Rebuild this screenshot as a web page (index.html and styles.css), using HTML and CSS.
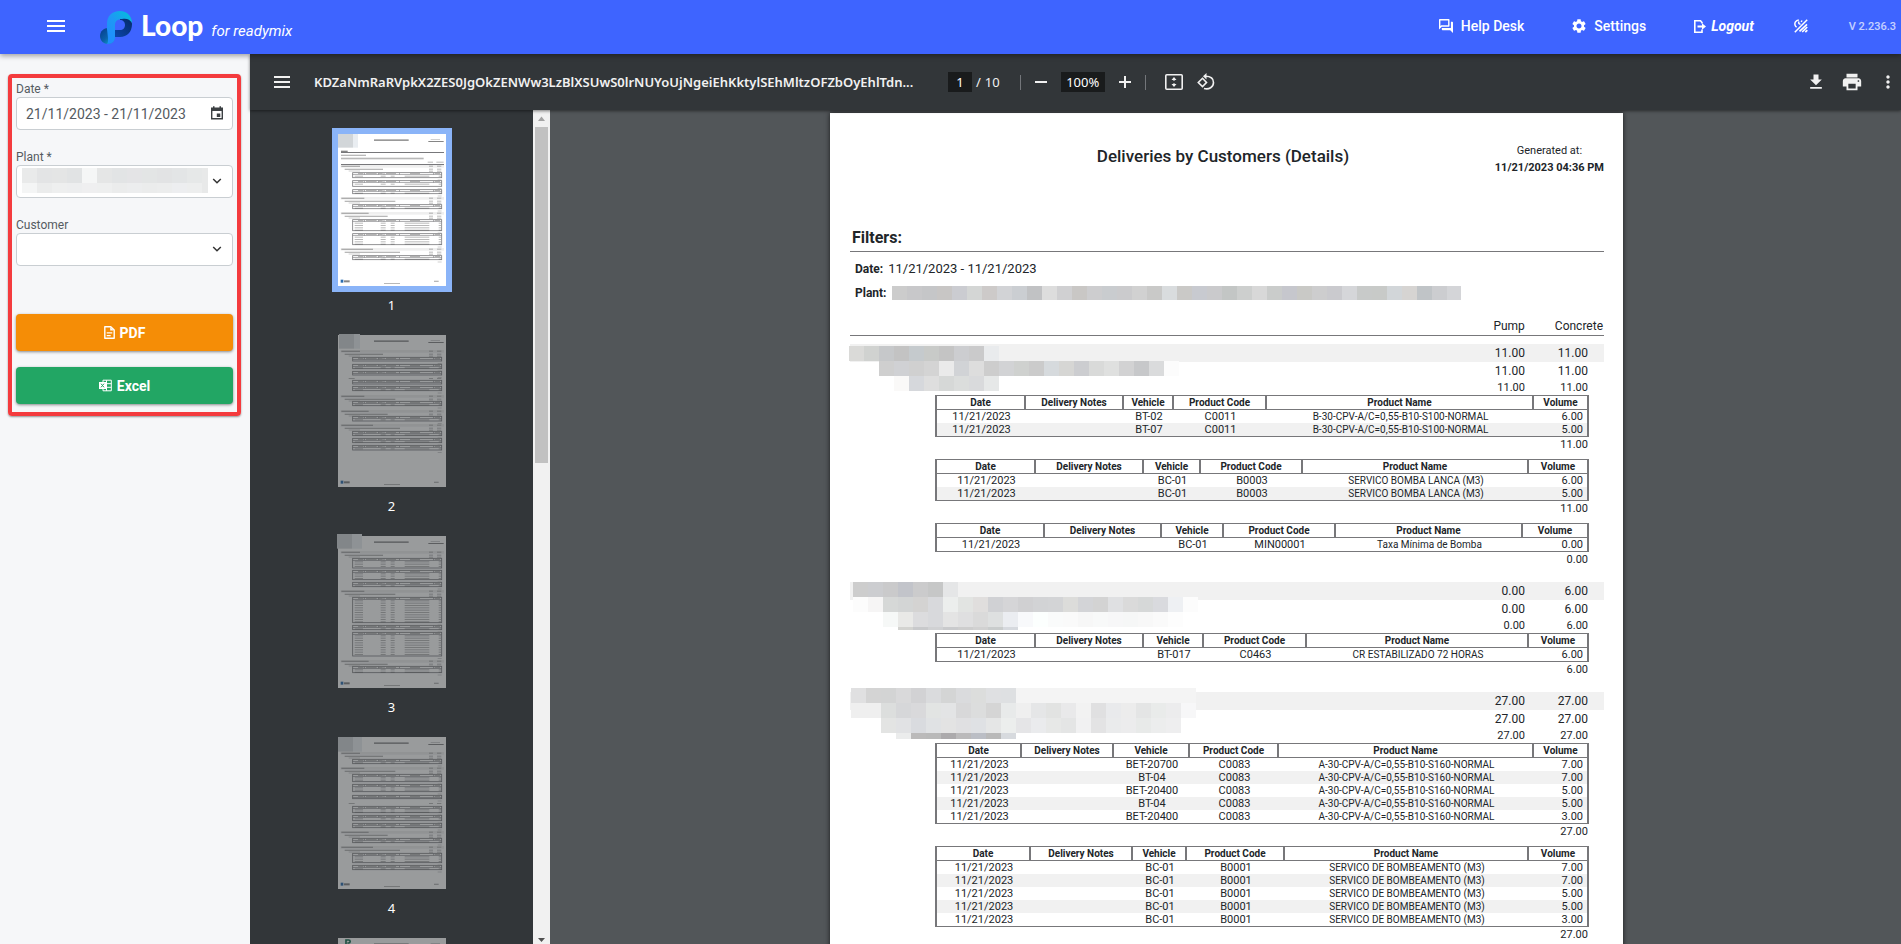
FILE: index.html
```html
<!DOCTYPE html>
<html lang="en">
<head>
<meta charset="utf-8">
<title>Loop for readymix - Deliveries by Customers</title>
<link rel="stylesheet" href="styles.css">
</head>
<body>
<header class="topbar">
  <button class="icon-btn menu-btn" type="button" aria-label="Menu">
    <svg width="18" height="12" viewBox="0 0 18 12"><path fill="currentColor" d="M0 0h18v2H0zM0 5h18v2H0zM0 10h18v2H0z"/></svg>
  </button>
  <a class="brand" href="#">
    <svg width="33" height="33" viewBox="0 0 33 33" aria-hidden="true">
      <defs>
        <linearGradient id="lg-top" x1="0" y1="1" x2="1" y2="0"><stop offset="0" stop-color="#1e8bff"/><stop offset=".5" stop-color="#1e98f5"/><stop offset="1" stop-color="#00c2d8"/></linearGradient>
        <linearGradient id="lg-dark" x1="1" y1="0" x2="0" y2="1"><stop offset="0" stop-color="#052a66"/><stop offset="1" stop-color="#0b46ad"/></linearGradient>
        <linearGradient id="lg-foot" x1="0" y1="0" x2="1" y2="1"><stop offset="0" stop-color="#063a8c"/><stop offset=".5" stop-color="#0a5fa8"/><stop offset="1" stop-color="#10b5dc"/></linearGradient>
      </defs>
      <path fill="url(#lg-dark)" d="M20 7c6-1 12 1 12 6 0 8-5 13-12 13h-6v-7h6c3 0 5-2 5-5s-2-5-5-5z"/>
      <path fill="url(#lg-foot)" d="M8 17h7v8c0 5-3 8-7 8s-8-3-8-8 4-8 8-8z"/>
      <path fill="url(#lg-top)" d="M7 18V13C7 5 12 0 20 0c7 0 12 5 12 12-2-4-6-5-10-4-4 0-7 2-7 6v12c0 4-3 7-8 7 1-1 1-3 1-6z"/>
    </svg>
    <span class="brand-name">Loop</span>
    <span class="brand-sub">for readymix</span>
  </a>
  <nav class="topnav">
    <a class="nav-help" href="#">
      <svg width="14" height="14" viewBox="2 2 20 20"><path fill="currentColor" d="M15 4v7H5.17L4 12.17V4h11m1-2H3c-.55 0-1 .45-1 1v14l4-4h10c.55 0 1-.45 1-1V3c0-.55-.45-1-1-1zm5 4h-2v9H6v2c0 .55.45 1 1 1h11l4 4V7c0-.55-.45-1-1-1z"/></svg>
      Help Desk</a>
    <a class="nav-settings" href="#">
      <svg width="14" height="14" viewBox="2 2 20 20"><path fill="currentColor" d="M19.14 12.94c.04-.3.06-.61.06-.94 0-.32-.02-.64-.07-.94l2.03-1.58c.18-.14.23-.41.12-.61l-1.92-3.32c-.12-.22-.37-.29-.59-.22l-2.39.96c-.5-.38-1.03-.7-1.62-.94l-.36-2.54c-.04-.24-.24-.41-.48-.41h-3.84c-.24 0-.43.17-.47.41l-.36 2.54c-.59.24-1.13.57-1.62.94l-2.39-.96c-.22-.08-.47 0-.59.22L2.74 8.87c-.12.21-.08.47.12.61l2.03 1.58c-.05.3-.09.63-.09.94s.02.64.07.94l-2.03 1.58c-.18.14-.23.41-.12.61l1.92 3.32c.12.22.37.29.59.22l2.39-.96c.5.38 1.03.7 1.62.94l.36 2.54c.05.24.24.41.48.41h3.84c.24 0 .44-.17.47-.41l.36-2.54c.59-.24 1.13-.56 1.62-.94l2.39.96c.22.08.47 0 .59-.22l1.92-3.32c.12-.22.07-.47-.12-.61l-2.01-1.58zM12 15.6c-1.98 0-3.6-1.62-3.6-3.6s1.62-3.6 3.6-3.6 3.6 1.62 3.6 3.6-1.62 3.6-3.6 3.6z"/></svg>
      Settings</a>
    <a class="nav-logout" href="#">
      <svg width="12" height="13" viewBox="0 0 12 13"><path fill="none" stroke="currentColor" stroke-width="1.600" d="M8 3.600V2.500L6.500.8H.8v11.400H8V9.500"/><path fill="currentColor" d="M3.500 5.600H8V3.300l4 3.200-4 3.200V7.400H3.500z"/></svg>
      Logout</a>
    <button class="icon-btn nav-theme" type="button" aria-label="Toggle theme">
      <svg width="14" height="14" viewBox="0 0 14 14" fill="none" stroke="currentColor" stroke-width="1.500"><path d="M.8 13.200 13.200.8"/><path d="M4.800.9C1.600 1.300.3 4 1.100 6.200c.3.9.8 1.500 1.500 2M5 2.500c-.8 1.400 0 3 1.500 2.500M8 1.500 7.200 3"/><path d="M5.500 12.300 13 5.300M8.200 13l5-5M11.300 13.200l2-2" stroke-width="1.700"/></svg>
    </button>
    <span class="version">V 2.236.3</span>
  </nav>
</header>

<div class="workspace">
  <aside class="sidebar">
    <form class="filters">
      <div class="field">
        <label for="date">Date *</label>
        <div class="control">
          <input id="date" type="text" value="21/11/2023 - 21/11/2023">
          <svg class="adorn cal" width="14" height="14" viewBox="0 0 14 14"><path fill="none" stroke="#3c4043" stroke-width="1.400" d="M1.700 2.200h10.600v10.600H1.700z"/><path fill="#3c4043" d="M1.500 2h11v3h-11zM3 .3h1.500V2H3zM9.500.3H11V2H9.500zM6.800 7.500h3.500V11H6.800z"/></svg>
        </div>
      </div>
      <div class="field">
        <label for="plant">Plant *</label>
        <div class="control">
          <select id="plant"><option></option></select>
          <svg class="mosaic field-mosaic" width="186" height="25" data-mosaic="field"></svg>
          <svg class="adorn" width="14" height="14" viewBox="0 0 14 14"><path fill="none" stroke="#333" stroke-width="1.500" d="M3.200 5 7 8.700 10.800 5"/></svg>
        </div>
      </div>
      <div class="field">
        <label for="customer">Customer</label>
        <div class="control">
          <select id="customer"><option></option></select>
          <svg class="adorn" width="14" height="14" viewBox="0 0 14 14"><path fill="none" stroke="#333" stroke-width="1.500" d="M3.200 5 7 8.700 10.800 5"/></svg>
        </div>
      </div>
      <div class="actions">
        <button class="export pdf" type="button">
          <svg width="11" height="13" viewBox="0 0 11 13"><path fill="none" stroke="currentColor" stroke-width="1.400" stroke-linejoin="round" d="M.8.8h6L10.200 4v8.200H.8z"/><path fill="currentColor" d="M6.200 1v3.600h3.600zM2.700 6.200h5.600v1.300H2.700zM2.700 8.900h4v1.300h-4z"/></svg>
          PDF</button>
        <button class="export excel" type="button">
          <svg width="13" height="13" viewBox="0 0 13 13"><path fill="none" stroke="currentColor" d="M4 3V1.200h8.300v10.600H4V10M7.500 1.200v10.600M7 4.700h5.300M7 8.300h5.300"/><path fill="currentColor" d="M0 3h7v7H0z"/><path stroke="#22a664" d="M2 4.700 5 8.300M5 4.700 2 8.300"/></svg>
          Excel</button>
      </div>
    </form>
  </aside>

  <main class="viewer">
    <div class="toolbar">
      <button class="icon-btn" type="button" aria-label="Toggle sidebar">
        <svg width="16" height="12" viewBox="0 0 16 12"><path fill="currentColor" d="M0 0h16v2H0zM0 5h16v2H0zM0 10h16v2H0z"/></svg>
      </button>
      <h2 class="doc-title">KDZaNmRaRVpkX2ZES0JgOkZENWw3LzBlXSUwS0lrNUYoUjNgeiEhKktylSEhMltzOFZbOyEhlTdn...</h2>
      <div class="pager"><input class="page-input" aria-label="Page number" value="1"><span>/</span><span>10</span></div>
      <span class="divider"></span>
      <button class="icon-btn" type="button" aria-label="Zoom out"><svg width="12" height="12" viewBox="0 0 12 12"><path fill="currentColor" d="M0 5h12v2H0z"/></svg></button>
      <input class="zoom-input" aria-label="Zoom level" value="100%">
      <button class="icon-btn" type="button" aria-label="Zoom in"><svg width="12" height="12" viewBox="0 0 12 12"><path fill="currentColor" d="M0 5h12v2H0zM5 0h2v12H5z"/></svg></button>
      <span class="divider"></span>
      <button class="icon-btn fit-btn" type="button" aria-label="Fit to page"><svg width="18" height="16" viewBox="0 0 18 16"><rect x=".8" y=".8" width="16.400" height="14.400" rx="1" fill="none" stroke="currentColor" stroke-width="1.600"/><path fill="currentColor" d="M9 3l2.500 3h-5zM9 13l2.500-3h-5zM8.500 6h1v1h-1zM8.500 9h1v1h-1z"/></svg></button>
      <button class="icon-btn" type="button" aria-label="Rotate"><svg width="18" height="18" viewBox="0 0 18 18" fill="none" stroke="currentColor" stroke-width="1.600"><path d="M5.500 5.300 9.500 9.500 5.500 13.600 1.300 9.500z"/><path d="M8.500 3.200c5 0 8 2.500 8 6.300 0 4.500-4.500 7.500-9.500 6"/><path fill="currentColor" stroke="none" d="M9.500 0v6.400L6 3.200z"/></svg></button>
      <div class="toolbar-end">
        <button class="icon-btn" type="button" aria-label="Download"><svg width="20" height="20" viewBox="0 0 24 24"><path fill="currentColor" d="M19 9h-4V3H9v6H5l7 7 7-7zM5 18v2h14v-2H5z"/></svg></button>
        <button class="icon-btn" type="button" aria-label="Print"><svg width="22" height="22" viewBox="0 0 24 24"><path fill="currentColor" d="M19 8H5c-1.660 0-3 1.340-3 3v6h4v4h12v-4h4v-6c0-1.660-1.340-3-3-3zm-3 11H8v-5h8v5zm3-7c-.55 0-1-.45-1-1s.45-1 1-1 1 .45 1 1-.45 1-1 1zm-1-9H6v4h12V3z"/></svg></button>
        <button class="icon-btn" type="button" aria-label="More actions"><svg width="20" height="20" viewBox="0 0 24 24"><path fill="currentColor" d="M12 8c1.100 0 2-.9 2-2s-.9-2-2-2-2 .9-2 2 .9 2 2 2zm0 2c-1.100 0-2 .9-2 2s.9 2 2 2 2-.9 2-2-.9-2-2-2zm0 6c-1.100 0-2 .9-2 2s.9 2 2 2 2-.9 2-2-.9-2-2-2z"/></svg></button>
      </div>
    </div>
    <div class="viewer-body">
      <div class="thumbs">
        <div class="thumb-list" id="thumb-list"></div>
        <div class="scrollbar" aria-hidden="true">
          <svg width="17" height="17" viewBox="0 0 17 17"><path fill="#a3a3a3" d="M8.500 6.500 12 11H5z"/></svg>
          <div class="scroll-thumb"></div>
          <svg width="17" height="17" viewBox="0 0 17 17"><path fill="#505050" d="M8.500 15 12 11H5z"/></svg>
        </div>
      </div>
      <div class="canvas">
        <article class="paper">
          <header class="paper-head">
            <h1>Deliveries by Customers (Details)</h1>
            <p class="generated">Generated at:<br><strong>11/21/2023 04:36 PM</strong></p>
          </header>
          <h3 class="filters-title">Filters:</h3>
          <dl class="filter-list">
            <div><dt>Date:</dt><dd>11/21/2023 - 11/21/2023</dd></div>
            <div><dt>Plant:</dt><dd><svg class="mosaic" width="569" height="14" data-mosaic="plant"></svg></dd></div>
          </dl>
          <div class="totals-head"><span>Pump</span><span>Concrete</span></div>

          <section class="group">
            <div class="group-head">
              <svg class="mosaic group-mosaic" width="1" height="1" data-mosaic="g1"></svg>
              <p class="sum band"><span>11.00</span><span>11.00</span></p>
              <p class="sum"><span>11.00</span><span>11.00</span></p>
              <p class="sum small"><span>11.00</span><span>11.00</span></p>
            </div>
            <table class="items t1">
              <colgroup><col><col><col><col><col><col></colgroup>
              <thead><tr><th>Date</th><th>Delivery Notes</th><th>Vehicle</th><th>Product Code</th><th>Product Name</th><th>Volume</th></tr></thead>
              <tbody>
                <tr><td>11/21/2023</td><td></td><td>BT-02</td><td>C0011</td><td>B-30-CPV-A/C=0,55-B10-S100-NORMAL</td><td>6.00</td></tr>
                <tr><td>11/21/2023</td><td></td><td>BT-07</td><td>C0011</td><td>B-30-CPV-A/C=0,55-B10-S100-NORMAL</td><td>5.00</td></tr>
              </tbody>
            </table>
            <p class="subtotal">11.00</p>
            <table class="items t2">
              <colgroup><col><col><col><col><col><col></colgroup>
              <thead><tr><th>Date</th><th>Delivery Notes</th><th>Vehicle</th><th>Product Code</th><th>Product Name</th><th>Volume</th></tr></thead>
              <tbody>
                <tr><td>11/21/2023</td><td></td><td>BC-01</td><td>B0003</td><td>SERVICO BOMBA LANCA (M3)</td><td>6.00</td></tr>
                <tr><td>11/21/2023</td><td></td><td>BC-01</td><td>B0003</td><td>SERVICO BOMBA LANCA (M3)</td><td>5.00</td></tr>
              </tbody>
            </table>
            <p class="subtotal">11.00</p>
            <table class="items t3">
              <colgroup><col><col><col><col><col><col></colgroup>
              <thead><tr><th>Date</th><th>Delivery Notes</th><th>Vehicle</th><th>Product Code</th><th>Product Name</th><th>Volume</th></tr></thead>
              <tbody>
                <tr><td>11/21/2023</td><td></td><td>BC-01</td><td>MIN00001</td><td>Taxa Mínima de Bomba</td><td>0.00</td></tr>
              </tbody>
            </table>
            <p class="subtotal">0.00</p>
          </section>

          <section class="group">
            <div class="group-head">
              <svg class="mosaic group-mosaic" width="1" height="1" data-mosaic="g2"></svg>
              <p class="sum band"><span>0.00</span><span>6.00</span></p>
              <p class="sum"><span>0.00</span><span>6.00</span></p>
              <p class="sum small"><span>0.00</span><span>6.00</span></p>
            </div>
            <table class="items t4">
              <colgroup><col><col><col><col><col><col></colgroup>
              <thead><tr><th>Date</th><th>Delivery Notes</th><th>Vehicle</th><th>Product Code</th><th>Product Name</th><th>Volume</th></tr></thead>
              <tbody>
                <tr><td>11/21/2023</td><td></td><td>BT-017</td><td>C0463</td><td>CR ESTABILIZADO 72 HORAS</td><td>6.00</td></tr>
              </tbody>
            </table>
            <p class="subtotal">6.00</p>
          </section>

          <section class="group">
            <div class="group-head">
              <svg class="mosaic group-mosaic" width="1" height="1" data-mosaic="g3"></svg>
              <p class="sum band"><span>27.00</span><span>27.00</span></p>
              <p class="sum"><span>27.00</span><span>27.00</span></p>
              <p class="sum small"><span>27.00</span><span>27.00</span></p>
            </div>
            <table class="items t5">
              <colgroup><col><col><col><col><col><col></colgroup>
              <thead><tr><th>Date</th><th>Delivery Notes</th><th>Vehicle</th><th>Product Code</th><th>Product Name</th><th>Volume</th></tr></thead>
              <tbody>
                <tr><td>11/21/2023</td><td></td><td>BET-20700</td><td>C0083</td><td>A-30-CPV-A/C=0,55-B10-S160-NORMAL</td><td>7.00</td></tr>
                <tr><td>11/21/2023</td><td></td><td>BT-04</td><td>C0083</td><td>A-30-CPV-A/C=0,55-B10-S160-NORMAL</td><td>7.00</td></tr>
                <tr><td>11/21/2023</td><td></td><td>BET-20400</td><td>C0083</td><td>A-30-CPV-A/C=0,55-B10-S160-NORMAL</td><td>5.00</td></tr>
                <tr><td>11/21/2023</td><td></td><td>BT-04</td><td>C0083</td><td>A-30-CPV-A/C=0,55-B10-S160-NORMAL</td><td>5.00</td></tr>
                <tr><td>11/21/2023</td><td></td><td>BET-20400</td><td>C0083</td><td>A-30-CPV-A/C=0,55-B10-S160-NORMAL</td><td>3.00</td></tr>
              </tbody>
            </table>
            <p class="subtotal">27.00</p>
            <table class="items t6">
              <colgroup><col><col><col><col><col><col></colgroup>
              <thead><tr><th>Date</th><th>Delivery Notes</th><th>Vehicle</th><th>Product Code</th><th>Product Name</th><th>Volume</th></tr></thead>
              <tbody>
                <tr><td>11/21/2023</td><td></td><td>BC-01</td><td>B0001</td><td>SERVICO DE BOMBEAMENTO (M3)</td><td>7.00</td></tr>
                <tr><td>11/21/2023</td><td></td><td>BC-01</td><td>B0001</td><td>SERVICO DE BOMBEAMENTO (M3)</td><td>7.00</td></tr>
                <tr><td>11/21/2023</td><td></td><td>BC-01</td><td>B0001</td><td>SERVICO DE BOMBEAMENTO (M3)</td><td>5.00</td></tr>
                <tr><td>11/21/2023</td><td></td><td>BC-01</td><td>B0001</td><td>SERVICO DE BOMBEAMENTO (M3)</td><td>5.00</td></tr>
                <tr><td>11/21/2023</td><td></td><td>BC-01</td><td>B0001</td><td>SERVICO DE BOMBEAMENTO (M3)</td><td>3.00</td></tr>
              </tbody>
            </table>
            <p class="subtotal">27.00</p>
          </section>
        </article>
      </div>
    </div>
  </main>
</div>
<script src="script.js"></script>
</body>
</html>
```

FILE: styles.css
```css
* { box-sizing: border-box; }
html, body { height: 100%; }
body {
  margin: 0;
  display: flex;
  flex-direction: column;
  overflow: hidden;
  font-family: Roboto, "Liberation Sans", sans-serif;
  color: #212529;
}
h1, h2, h3, p, dl, dd { margin: 0; }
svg { display: block; flex: none; }
a { color: inherit; text-decoration: none; }
.icon-btn {
  display: flex;
  align-items: center;
  justify-content: center;
  padding: 0;
  border: 0;
  background: none;
  color: inherit;
}

/* Top bar */
.topbar {
  position: relative;
  z-index: 2;
  flex: none;
  display: flex;
  align-items: center;
  height: 54px;
  padding: 0 5px 0 47px;
  background: #3e64ff;
  color: #fff;
  box-shadow: 0 2px 5px rgba(0, 0, 0, .35);
}
.menu-btn { margin: 0 35px 3px 0; }
.brand { display: flex; align-items: center; }
.brand-name {
  margin: 0 8px 4px;
  font: 900 28px/32px Lato, sans-serif;
}
.brand-sub { padding-top: 8px; font-size: 15px; font-style: italic; }
.topnav {
  margin-left: auto;
  padding-bottom: 2px;
  display: flex;
  align-items: center;
  font-size: 14px;
  font-weight: 500;
}
.topnav a { display: flex; align-items: center; gap: 8px; }
.nav-help, .nav-settings { margin-right: 48px; }
.topnav .nav-logout { gap: 5px; margin-right: 40px; font-weight: 700; font-style: italic; }
.nav-theme { margin-right: 41px; }
.version { font-size: 11px; font-weight: 500; opacity: .7; }

/* Filter panel */
.workspace { flex: 1; min-height: 0; display: flex; }
.sidebar {
  flex: none;
  width: 250px;
  padding: 20px 9px 0 8px;
  background: #f6f7f9;
}
.filters {
  padding: 3px 4px;
  border: 4px solid #f43b3e;
  border-radius: 4px;
  box-shadow: 0 1px 2px rgba(0, 0, 0, .4);
}
.field { margin-bottom: 19px; }
.field label {
  display: block;
  font-size: 12px;
  line-height: 16px;
  color: #555b61;
}
.control { position: relative; }
.control input, .control select {
  display: block;
  width: 100%;
  height: 33px;
  padding: 0 9px;
  border: 1px solid #c9ced2;
  border-radius: 4px;
  background: #fff;
  color: #555b61;
  font: 14px Roboto, sans-serif;
  appearance: none;
}
.adorn { position: absolute; right: 9px; top: 9px; pointer-events: none; }
.field-mosaic { position: absolute; left: 6px; top: 3px; pointer-events: none; }
.actions {
  display: flex;
  flex-direction: column;
  gap: 16px;
  padding: 29px 0 5px;
}
.export {
  display: flex;
  align-items: center;
  justify-content: center;
  gap: 5px;
  height: 37px;
  border: 0;
  border-radius: 4px;
  color: #fff;
  font: 700 14px Roboto, sans-serif;
  box-shadow: 0 1px 3px rgba(0, 0, 0, .45);
}
.pdf { background: #f58d06; }
.excel { background: #22a664; }

/* PDF viewer */
.viewer { flex: 1; min-width: 0; display: flex; flex-direction: column; }
.toolbar {
  position: relative;
  z-index: 1;
  flex: none;
  display: flex;
  align-items: center;
  height: 56px;
  padding: 0 0 0 24px;
  background: #323639;
  color: #f1f1f1;
  box-shadow: 0 1px 3px rgba(0, 0, 0, .5);
}
.doc-title {
  margin: 0 12px 0 24px;
  flex: 0 1 622px;
  overflow: hidden;
  white-space: nowrap;
  font: 600 13px/24px "Noto Sans", "Open Sans", sans-serif;
}
.pager {
  display: flex;
  align-items: center;
  gap: 4px;
  font: 13px/20px "Noto Sans", sans-serif;
}
.page-input, .zoom-input {
  height: 20px;
  padding: 0;
  border: 0;
  background: #191b1c;
  color: #fff;
  text-align: center;
  font: 13px/20px "Noto Sans", sans-serif;
}
.page-input { width: 24px; }
.zoom-input { width: 44px; margin: 0 14px; }
.divider { width: 1px; height: 15px; margin: 0 14px 0 20px; background: #73767a; }
.zoom-input ~ .divider { margin: 0 19px 0 14px; }
.fit-btn { margin-right: 14px; }
.toolbar-end { margin-left: auto; display: flex; align-items: center; gap: 15px; padding-right: 3px; }
.viewer-body { flex: 1; min-height: 0; display: flex; }
.thumbs { flex: none; width: 300px; display: flex; background: #323639; }
.thumb-list {
  flex: 1;
  display: flex;
  flex-direction: column;
  align-items: center;
  gap: 31px;
  padding-top: 24px;
  overflow: hidden;
  color: #fff;
}
.thumb {
  flex: none;
  display: flex;
  flex-direction: column;
  align-items: center;
  gap: 10px;
  font: 13px/18px "Noto Sans", sans-serif;
  height: 170px;
  margin: 0;
}
.thumb svg { overflow: visible; background: #fff; }
.thumb.dim svg { opacity: .5; }
.thumb.current svg { outline: 6px solid #8ab4f8; }
.thumb figcaption { margin: 0; }
.scrollbar {
  flex: none;
  width: 17px;
  display: flex;
  flex-direction: column;
  align-items: center;
  background: #f1f1f1;
}
.scroll-thumb { width: 13px; height: 336px; margin-bottom: auto; background: #c1c1c1; }
.canvas {
  flex: 1;
  min-width: 0;
  padding: 3px 0 0 2px;
  display: flex;
  justify-content: center;
  align-items: flex-start;
  overflow: hidden;
  background: #525659;
}

/* Report */
.paper {
  flex: 0 1 793px;
  min-height: 1123px;
  padding: 27px 19px 0 20px;
  background: #fff;
  box-shadow: 0 0 5px rgba(0, 0, 0, .7);
}
.paper-head {
  display: grid;
  grid-template-columns: 1fr auto 1fr;
  padding-right: 8px;
}
.paper-head h1 { grid-column: 2; font-weight: 500; font-size: 17px; line-height: 32px; }
.generated { justify-self: end; margin-right: -8px; padding-top: 2px; text-align: center; font-size: 11px; line-height: 17px; }
.filters-title {
  margin-top: 50px;
  padding: 0 2px 1px;
  border-bottom: 1px solid #77777a;
  font-weight: 700;
  font-size: 16px;
  line-height: 24px;
}
.filter-list { padding: 5px 5px 0; font-size: 13px; line-height: 24px; }
.filter-list div { display: flex; align-items: center; gap: 5px; }
.filter-list dt { font-weight: 700; font-size: 12px; }
.totals-head {
  display: flex;
  justify-content: flex-end;
  gap: 30px;
  padding: 12px 1px 0 0;
  border-bottom: 1px solid #77777a;
  font-size: 12px;
  line-height: 18px;
}
.group { padding-top: 8px; }
.group-head { position: relative; }
.group-mosaic { position: absolute; left: 0; top: 0; overflow: visible; }
.sum {
  display: grid;
  grid-template-columns: 1fr 63px;
  padding-right: 16px;
  text-align: right;
  font-size: 12px;
  line-height: 18px;
}
.sum.band { background: #f1f1f1; }
.sum.small { font-size: 11px; line-height: 15px; }
.items {
  table-layout: fixed;
  width: calc(100% - 100px);
  margin-left: 85px;
  border: solid #77777a;
  border-width: 1px 2px;
  border-spacing: 0;
  font-size: 11px;
  line-height: 13px;
}
.items th {
  padding: 0;
  border-bottom: 1px solid #77777a;
  border-right: 2px solid #77777a;
  font-size: 10px;
  font-weight: 700;
}
.items th:last-child { border-right: 0; }
.items td { height: 13px; padding: 0; text-align: center; white-space: nowrap; }
.items td:nth-child(5) { font-size: 10px; }
.items td:last-child { padding-right: 4px; text-align: right; }
.items tbody tr:nth-child(even) { background: #f1f1f1; }
.subtotal { padding-right: 16px; height: 22px; text-align: right; font-size: 11px; line-height: 16px; }
.t1 col:nth-child(1) { width: 89px; }
.t1 col:nth-child(2) { width: 98px; }
.t1 col:nth-child(3) { width: 50px; }
.t1 col:nth-child(4) { width: 93px; }
.t2 col:nth-child(1), .t4 col:nth-child(1) { width: 99px; }
.t2 col:nth-child(2), .t4 col:nth-child(2) { width: 108px; }
.t2 col:nth-child(3) { width: 57px; }
.t2 col:nth-child(4) { width: 102px; }
.t3 col:nth-child(1) { width: 108px; }
.t3 col:nth-child(2) { width: 117px; }
.t3 col:nth-child(3) { width: 62px; }
.t3 col:nth-child(4) { width: 112px; }
.t4 col:nth-child(3) { width: 60px; }
.t4 col:nth-child(4) { width: 103px; }
.t5 col:nth-child(1) { width: 85px; }
.t5 col:nth-child(2) { width: 92px; }
.t5 col:nth-child(3) { width: 76px; }
.t5 col:nth-child(4) { width: 89px; }
.t6 col:nth-child(1) { width: 94px; }
.t6 col:nth-child(2) { width: 102px; }
.t6 col:nth-child(3) { width: 54px; }
.t6 col:nth-child(4) { width: 98px; }
.t1 col:last-child, .t5 col:last-child { width: 53px; }
.t2 col:last-child, .t4 col:last-child, .t6 col:last-child { width: 58px; }
.t3 col:last-child { width: 64px; }
```

FILE: script.js
```js
// Redacted names: rows of 15px blocks, [x, y, height, colours].
const MOSAICS = {
  field: [
    [0, 0, 15, "e9eaea e3e4e5 e4e5e5 e1e3e4 f5f6f6 e5e6e6 e2e4e5 e4e4e6 e3e5e5 e2e3e4 e3e5e6 e6e8e8 e8e9e9"],
    [0, 15, 10, "f4f5f5 ebecec eeefef edeeef efeff0 eeefef ebecec ecedee ebecec eceded edeef0 edeeee e8e9e9"]
  ],
  plant: [
    [0, 0, 14, "cccccc c8c8ca c5c6c8 c8c6c5 cbccd1 d4d6d5 cdcac9 d2d3d6 cbced2 c1c2c4 dddddd d0d0d2 c9c7c5 cdcdcf c9cccf cbcbcd d1d1d1 c9c9c8 d9dcde cac9c7 c8cad0 cacacc c3c6c5 cdcfce d8d8d8 cacccb c6c7cd c9c9c6 cdcdce cacace d5d6d9 c8cac9 c8cac8 d2d6d9 d6d4d2 c0c4c7 cccdd0 d4d5d8"]
  ],
  g1: [
    [-1, 2, 15, "dadad8 d0d2d0 c6c8ca c3c3c3 c5cacd c8cac8 c4c4c4 cccdd0 cacacb e9ebed"],
    [29, 17, 15, "cfcfcf d0d1d4 d0d0d0 d4d4d4 eaeaea d1d3d6 dddddd cdcdcd d2d3d5 cfd1cf cbcbcb d6dadd d6d6d4 cccdd0 d9dad9 dfe0df d2d2d3 c7c8ca dadbdc fcfcfc"],
    [44, 32, 15, "faf9f8 d6d8dc dedede d6d8d7 dbdddc d9dadc e6e8e8"]
  ],
  g2: [
    [3, 0, 15, "cdcdcd cccdd0 cacacb c2c4ca cbcbcc c6c7c7 e5e6e7"],
    [3, 15, 15, "fcfcfc f6f5f5 d6d8d7 d3d5d5 d4d3d2 d8d9dc eceeed e2e4e2 e0dedd d0d1d4 d5d5d7 d0d0d2 d2d3d5 d3d4d6 dcdcda d3d4d7 d3d3d3 dfe0e2 dadada d6d8d8 d9dade eef0f3 fcfcfc"],
    [33, 30, 15, "f6f8f7 e9e9e7 dcdcde d8d9dc e4e4e4 dfdfe0 dadada dee0e0 ebedf1 f8f9fb fcfffe fafbfb fafafa f7f7f7 f8f9f9 f7f7f8 f6f7f7 f8f8f8 fafafa fdfdfd"],
    [48, 45, 3, "d3d3d0 c8c9cb d0d1d3 c9cacc cdcdcd d1d1d1 c9cccc d6d9de"]
  ],
  g3: [
    [1, -4, 15, "e0e0e1 d4d4d4 d3d4d4 d9d9da d2d2d4 dadbdd d4d5d5 dadbdd dcdddc dfe0e2 dee0e2 f4f4f4 f4f4f4 f4f4f4 f4f4f4 f4f4f4 f4f4f4 f4f4f4 f4f4f4 f4f4f4 f4f4f4 f4f4f4 f4f4f4"],
    [1, 11, 15, "efefef efefef dcdedd d6d7d9 d9d9db e2e4e3 e3e4e5 d8d8d9 dcdddd d5d5d5 e8eaea efefef e5e6e7 e2e3e2 e9e9ea f2f2f2 e0e0e1 e9eaec ececec e4e5e5 e9ebea ececed f7f7f8"],
    [31, 26, 15, "e3e4e3 e1e2e4 d9dbdf e0e2e4 e3e3e3 e0e0e2 dfe1e4 e5e6e6 eceeed e5e5e7 eaebed e7e8e7 e4e5e5 f1f1f2 e3e3e4 eaebec ececed e8eae9 eceded eeeeef"],
    [46, 41, 6, "ebecec bbbaba b9b9b9 acaaac bbbabb bbbec5 b9b9b9 d7dade"]
  ]
};

const rect = (x, y, w, h, fill) =>
  `<rect x="${x}" y="${y}" width="${w}" height="${h}" fill="${fill}"/>`;

document.querySelectorAll("[data-mosaic]").forEach((svg) => {
  svg.setAttribute("shape-rendering", "crispEdges");
  svg.innerHTML = MOSAICS[svg.dataset.mosaic]
    .map(([x, y, h, row]) => row.split(" ").map((c, i) => rect(x + i * 15, y, 15, h, "#" + c)).join(""))
    .join("");
});

// Page previews on a 324x456 grid: band tops, sub-headings and [top, bottom] of each table.
const PAGES = [
  { first: true, logo: [0, -3, 60], bands: [97, 193, 238, 346],
    tables: [[116, 131], [140, 157], [167, 179], [212, 224], [257, 290], [299, 332], [365, 377]] },
  { logo: [3, -3, 63], bands: [49, 184, 229, 271], subs: [130],
    tables: [[67, 78], [88, 101], [109, 120], [136, 147], [154, 167], [199, 212], [244, 258], [289, 302], [310, 323], [331, 345]] },
  { logo: [-3, -6, 75], bands: [49, 166, 376],
    tables: [[67, 96], [103, 131], [139, 152], [184, 260], [268, 281], [289, 360], [391, 410]] },
  { logo: [0, 0, 72], bands: [49, 94, 286, 331], subs: [199],
    tables: [[67, 80], [112, 134], [142, 164], [175, 185], [208, 227], [235, 251], [259, 272], [304, 317], [349, 377], [385, 398]] },
  { green: true, bands: [49], tables: [[67, 96]] }
];

const smear = (x, y, w, h = 3, o = 0.35) =>
  `<rect x="${x}" y="${y}" width="${w}" height="${h}" fill="#333" opacity="${o}"/>`;

function table([top, bottom]) {
  let out = `<rect x="44" y="${top}" width="267" height="${bottom - top}" fill="#fff" stroke="#7c7c7f" stroke-width="2.500"/>`;
  out += rect(43, top + 5, 269, 2, "#8a8a8d");
  [[60, 16], [84, 32], [122, 12], [144, 30], [216, 30], [290, 16]].forEach(([x, w]) => { out += smear(x, top + 2, w, 2, 0.5); });
  [79, 120, 137, 184, 286].forEach((x) => { out += rect(x, top + 1, 2, 5, "#8a8a8d"); });
  for (let y = top + 9; y < bottom - 2; y += 7) {
    out += smear(50, y, 25) + smear(128, y, 15) + smear(158, y, 12) + smear(200, y, 74) + smear(302, y, 7);
  }
  return out + smear(299, bottom + 6, 12, 2);
}

function page(p) {
  let out = smear(108, 16, 104, 5, 0.5) + smear(278, 15, 28, 2) + smear(271, 21, 46, 3, 0.6);
  if (p.first) {
    out += smear(9, 50, 20, 4, 0.6) + rect(9, 54, 309, 3, "#77777a") + smear(9, 62, 75, 4)
      + smear(9, 71, 248, 5) + smear(269, 83, 16) + smear(295, 83, 22) + rect(9, 90, 309, 3, "#77777a");
  }
  p.bands.forEach((y, i) => {
    out += rect(8, y - 4, 310, 8, "#efefef") + smear(10, y - 2, 56 + (i * 13) % 40, 4)
      + smear(20, y + 7, 115 + (i * 37) % 60, 4) + smear(32, y + 13, 34, 2);
    [-2, 7, 13].forEach((d) => { out += smear(273, y + d, 12) + smear(297, y + d, 13); });
  });
  (p.subs || []).forEach((y) => { out += smear(32, y - 1, 18) + smear(273, y - 1, 12) + smear(297, y - 1, 13); });
  out += p.tables.map(table).join("");
  out += rect(8, 437, 8, 9, "#2b6db0") + smear(18, 439, 17, 6, 0.6) + smear(138, 447, 48, 3) + smear(288, 440, 14, 4);
  if (p.logo) {
    const [x, y, w] = p.logo;
    out += rect(x, y, 45, 44, "#d2d6d9") + rect(x + 45, y, w - 45, 44, "#e9edf1");
  }
  if (p.green) out += `<path d="M24 20V6h8a4 4 0 0 1 0 9h-4" fill="none" stroke="#0c6b4c" stroke-width="5"/>`;
  return out;
}

document.getElementById("thumb-list").innerHTML = PAGES.map((p, i) =>
  `<figure class="thumb ${i ? "dim" : "current"}">
    <svg width="108" height="152" viewBox="0 0 324 456">${page(p)}</svg>
    <figcaption>${i + 1}</figcaption>
  </figure>`).join("");
```
